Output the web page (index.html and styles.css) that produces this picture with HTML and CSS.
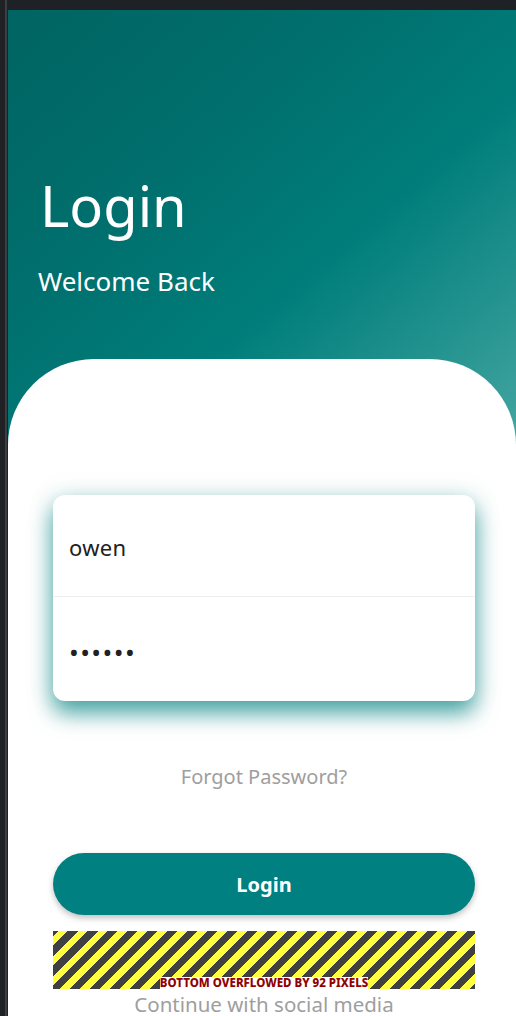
FILE: index.html
```html
<!DOCTYPE html>
<html lang="en">
<head>
<meta charset="utf-8">
<title>Login</title>
<link rel="stylesheet" href="styles.css">
</head>
<body>
<div class="rail"></div>
<div class="screen">
  <div class="topbar"></div>
  <main class="main">
    <header class="header">
      <h1 class="title">Login</h1>
      <p class="subtitle">Welcome Back</p>
    </header>
    <section class="panel">
      <form class="card">
        <div class="field"><span class="value">owen</span></div>
        <div class="field field-pass"><span class="dots">••••••</span></div>
      </form>
      <p class="forgot">Forgot Password?</p>
      <button class="login-btn" type="button">Login</button>
      <div class="overflow"><span class="overflow-label">BOTTOM OVERFLOWED BY 92 PIXELS</span></div>
      <p class="social">Continue with social media</p>
    </section>
  </main>
</div>
</body>
</html>
```
FILE: styles.css
```css
* { box-sizing: border-box; }
html, body { margin: 0; height: 100%; }
body {
  display: flex;
  background: #1f2124;
  overflow: hidden;
  font-family: "Noto Sans", "Open Sans", sans-serif;
}
.rail {
  width: 8px;
  flex: none;
  background: linear-gradient(to right, #1f2124 0 5px, #3b3e42 5px 7px, #1f2124 7px 8px);
}
.screen {
  flex: 1;
  display: flex;
  flex-direction: column;
  min-width: 0;
}
.topbar {
  height: 10px;
  flex: none;
  background: #1e2226;
}
.main {
  flex: 1;
  display: flex;
  flex-direction: column;
  overflow: hidden;
  background: linear-gradient(to bottom right, #006462 0%, #00706e 35%, #007e7b 60%, #45a6a2 100%) top / 100% 440px no-repeat, #fff;
}
.header {
  padding: 167px 0 0 32px;
  height: 349px;
  flex: none;
  color: #fff;
}
.title {
  margin: 0;
  font-size: 56px;
  line-height: 56px;
  font-weight: 400;
}
.subtitle {
  margin: 35px 0 0 -2px;
  font-size: 26px;
  line-height: 26px;
}
.panel {
  flex: 1;
  background: #fff;
  border-radius: 86px 86px 0 0;
  padding: 136px 41px 0 45px;
  display: flex;
  flex-direction: column;
  align-items: stretch;
}
.card {
  background: #fff;
  border-radius: 12px;
  box-shadow: 0 12px 22px rgba(0, 128, 128, 0.7), 0 0 26px rgba(0, 128, 128, 0.15);
  display: flex;
  flex-direction: column;
}
.field {
  height: 102px;
  display: flex;
  align-items: center;
  padding: 3px 0 0 16px;
  border-bottom: 1px solid #eeeeee;
  font-size: 22px;
  color: #212121;
}
.field-pass { height: 104px; border-bottom: none; padding-top: 5px; }
.value { letter-spacing: 0.3px; }
.dots {
  font-size: 26px;
  letter-spacing: 1.4px;
  color: #212121;
  line-height: 26px;
}
.forgot {
  margin: 62px 0 0;
  text-align: center;
  color: #9e9e9e;
  font-size: 20px;
  line-height: 28px;
}
.login-btn {
  margin-top: 62px;
  height: 62px;
  border: none;
  border-radius: 31px;
  background: #008080;
  color: #fff;
  font-family: "Noto Sans", "Open Sans", sans-serif;
  font-size: 20px;
  font-weight: 700;
  box-shadow: 0 3px 6px rgba(0, 0, 0, 0.25);
}
.overflow {
  margin-top: 16px;
  height: 58px;
  flex: none;
  display: flex;
  align-items: flex-end;
  justify-content: center;
  background: repeating-linear-gradient(135deg, #404040 0 3.54px, #ffff40 3.54px 10.6px, #404040 10.6px 14.14px);
}
.overflow-label {
  background: #fff;
  color: #900000;
  font-size: 11.5px;
  font-weight: 800;
  line-height: 12px;
  margin-bottom: 0;
}
.social {
  margin: 1px 0 0;
  text-align: center;
  color: #9e9e9e;
  font-size: 20.5px;
  line-height: 28px;
}
```
